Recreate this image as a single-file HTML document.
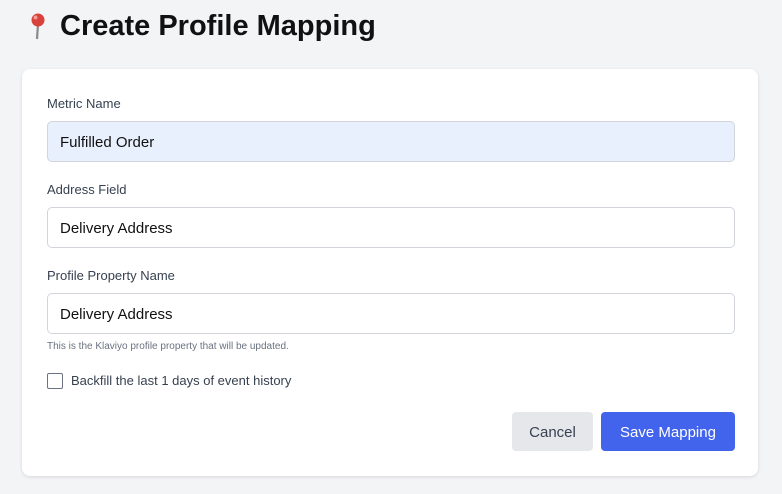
<!DOCTYPE html>
<html><head><meta charset="utf-8"><style>
*{box-sizing:border-box;margin:0;padding:0}
body{width:782px;height:494px;background:#f3f4f6;font-family:"Liberation Sans",sans-serif;color:#111;position:relative;overflow:hidden}
h1{position:absolute;left:60px;top:10px;font-size:29px;font-weight:bold;color:#111;letter-spacing:0px}
.pin{position:absolute;left:27px;top:12px}
.card{position:absolute;left:22px;top:69px;width:736px;height:407px;background:#fff;border-radius:8px;box-shadow:0 1px 3px rgba(0,0,0,.12)}
.lbl{position:absolute;left:25px;font-size:13px;color:#374151}
.inp{position:absolute;left:25px;width:688px;height:41px;border:1px solid #d1d5db;border-radius:5px;font-size:15px;padding:12px 0 0 12px;color:#111}
.help{position:absolute;left:25px;top:272px;font-size:10px;color:#6b7280}
.cb{position:absolute;left:25px;top:304px;width:16px;height:16px;border:1px solid #6b7280;border-radius:2px}
.cbl{position:absolute;left:49px;top:304px;font-size:13px;color:#374151}
.btn{position:absolute;top:343px;height:39px;border-radius:4px;font-size:15px;text-align:center;line-height:41px}
</style></head><body>
<svg class="pin" width="22" height="28" viewBox="0 0 22 28"><line x1="11" y1="12" x2="10" y2="27" stroke="#8a8a8a" stroke-width="2.2"/><circle cx="11" cy="8" r="6.5" fill="#d9413b"/><circle cx="8.5" cy="5.5" r="2" fill="#f29a94"/></svg>
<h1>Create Profile Mapping</h1>
<div class="card">
<div class="lbl" style="top:27px">Metric Name</div>
<div class="inp" style="top:52px;background:#e8effd">Fulfilled Order</div>
<div class="lbl" style="top:113px">Address Field</div>
<div class="inp" style="top:138px">Delivery Address</div>
<div class="lbl" style="top:199px">Profile Property Name</div>
<div class="inp" style="top:224px">Delivery Address</div>
<div class="help">This is the Klaviyo profile property that will be updated.</div>
<div class="cb"></div>
<div class="cbl">Backfill the last 1 days of event history</div>
<div class="btn" style="left:490px;width:81px;background:#e5e7eb;color:#374151">Cancel</div>
<div class="btn" style="left:579px;width:134px;background:#4263eb;color:#fff">Save Mapping</div>
</div>
</body></html>
